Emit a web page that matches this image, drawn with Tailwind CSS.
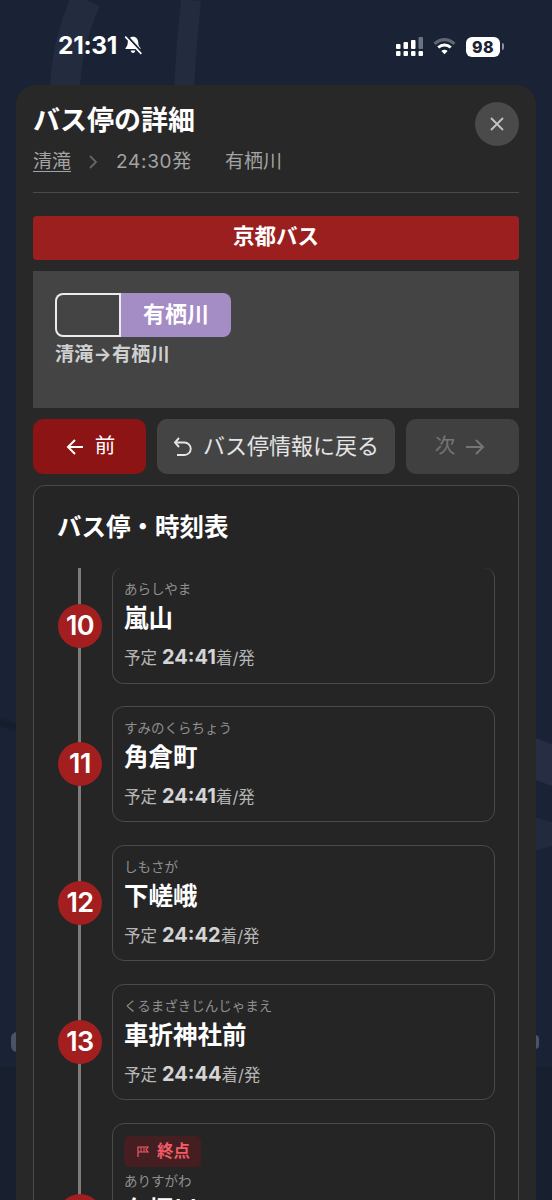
<!doctype html>
<html lang="ja"><head><meta charset="utf-8"><script src="https://cdn.jsdelivr.net/npm/@tailwindcss/browser@4"></script></head>
<body class="m-0">
<div class="relative w-[552px] h-[1200px] overflow-hidden bg-[#1a2335] font-['Inter','Noto_Sans_CJK_JP',sans-serif]">
  <svg class="absolute left-0 top-0" width="552" height="1200" fill="none" stroke="#232c3f">
    <path d="M86 0 Q66 45 65 90" stroke-width="30"/>
    <path d="M191 0 Q186 45 184 90" stroke-width="20"/>
    <path d="M530 736 L552 744 V786 L530 778 Z" fill="#272e43" stroke="none"/>
    <path d="M530 816 L552 822 V846 L530 852 Z" fill="#222a3e" stroke="none"/>
    <path d="M0 722 L16 728" stroke="#161e2e" stroke-width="8"/>
  </svg>
  <div class="absolute left-0 top-[1067px] w-[552px] h-[133px] bg-[#182030]"></div>
  <div class="absolute left-[11px] top-[1032px] w-[6px] h-[20px] rounded-l-full bg-[#4a5368]"></div>
  <div class="absolute left-[535px] top-[1035px] w-[4px] h-[14px] rounded-r-full bg-[#4a5368]"></div>

  <!-- status bar -->
  <div class="absolute left-[58px] top-[30px] flex items-center gap-[6px] text-white">
    <span class="text-[24.500px] leading-[30px] font-bold tracking-[-0.3px]">21:31</span>
    <svg width="20" height="20" viewBox="0 0 18 18" fill="#fff"><path d="M9 1.500c-3 0-4.600 2.200-4.700 5-.1 2.500-.9 4-2 5.300-.3.4 0 .9.4.9h12.600c.5 0 .7-.5.4-.9-1.100-1.300-1.900-2.800-2-5.300-.1-2.800-1.700-5-4.700-5zM7 14h4c0 1.200-.9 2.200-2 2.200S7 15.200 7 14z"/><path d="M3.500 1 L17 15.500" stroke="#1a2335" stroke-width="2"/><path d="M2 1.500 L16.500 17" stroke="#fff" stroke-width="1.500"/></svg>
  </div>
  <svg class="absolute left-[396px] top-[37px]" width="28" height="20" viewBox="0 0 28 20" fill="#fff"><rect x="0" y="7" width="4.500" height="5" rx="1"/><rect x="0" y="14" width="4.500" height="5" rx="1"/><rect x="7.500" y="5" width="4.500" height="7" rx="1"/><rect x="7.500" y="14" width="4.500" height="5" rx="1"/><rect x="15" y="3" width="4.500" height="9" rx="1"/><rect x="15" y="14" width="4.500" height="5" rx="1"/><rect x="22.500" y="0" width="4.500" height="12" rx="1" fill="#6b7280"/><rect x="22.500" y="14" width="4.500" height="5" rx="1"/></svg>
  <svg class="absolute left-[433px] top-[37px]" width="23" height="19" viewBox="0 0 22 18" fill="none"><path d="M1.500 6.500C7 1 15 1 20.500 6.500" stroke="#5f6675" stroke-width="3"/><path d="M5 10c3.500-3.300 8.500-3.300 12 0" stroke="#fff" stroke-width="2.800"/><path d="M11 16.500l-3-3.300c1.800-1.500 4.200-1.500 6 0z" fill="#fff"/></svg>
  <div class="absolute left-[466px] top-[37px] w-[34px] h-[20px] rounded-[6px] bg-white text-[#1a2335] text-[16px] leading-[20px] font-extrabold text-center tracking-[0.5px]">98</div>
  <div class="absolute left-[502px] top-[43px] w-[1.500px] h-[7px] rounded-r bg-[#8a909c]"></div>

  <!-- sheet -->
  <div class="absolute left-[16px] top-[85px] w-[520px] h-[1115px] rounded-t-[20px] bg-[#282828] px-[17px] pt-[17px]">
    <div class="flex justify-between items-start h-[91px] border-b border-[#4a4a4a]">
      <div class="pt-[1px]">
        <div class="text-[27px] leading-[36px] font-bold text-white">バス停の詳細</div>
        <div class="mt-[10px] flex items-center text-[19px] leading-[26px] text-[#a3a3a3]">
          <span class="underline underline-offset-[3px]">清滝</span>
          <svg class="ml-[18px] mr-[18px]" width="9" height="14" viewBox="0 0 9 14" fill="none" stroke="#666" stroke-width="1.800"><path d="M1 1l6 6-6 6"/></svg>
          <span class="w-[109px] tracking-[0.7px]">24:30発</span>
          <span>有栖川</span>
        </div>
      </div>
      <div class="w-[44px] h-[44px] rounded-full bg-[#4a4a4a] flex items-center justify-center">
        <svg width="14" height="14" viewBox="0 0 14 14" stroke="#c4c4c4" stroke-width="1.800"><path d="M1 1l12 12M13 1L1 13"/></svg>
      </div>
    </div>
    <div class="mt-[23px] h-[44px] rounded-[4px] bg-[#9b1f1f] text-white text-[21.500px] leading-[41px] font-bold text-center">京都バス</div>
    <div class="mt-[11px] h-[137px] bg-[#444444] pl-[22px] pt-[22px]">
      <div class="flex h-[44px] w-[176px]">
        <div class="w-[66px] rounded-l-[8px] border-2 border-white/90 bg-[#444444]"></div>
        <div class="w-[110px] rounded-r-[8px] bg-[#a48cc4] text-white text-[22px] leading-[42px] font-bold text-center">有栖川</div>
      </div>
      <div class="mt-[5px] text-[19px] leading-[26px] font-bold tracking-[0.3px] text-[#cfcfcf]">清滝→有栖川</div>
    </div>
    <div class="mt-[11px] flex gap-[11px] h-[55px]">
      <div class="w-[113px] rounded-[10px] bg-[#8c1414] text-white text-[20.500px] flex items-center justify-center gap-[11px] pl-[2px]">
        <svg width="18" height="18" viewBox="0 0 18 18" fill="none" stroke="#fff" stroke-width="2"><path d="M17 9H2M9 2L2 9l7 7"/></svg><span>前</span>
      </div>
      <div class="w-[238px] rounded-[10px] bg-[#444444] text-[#e5e5e5] text-[22px] flex items-center justify-center gap-[10px]">
        <svg width="20" height="20" viewBox="0 0 20 20" fill="none" stroke="#e5e5e5" stroke-width="1.900"><path d="M6 1L2 5.500 6 10"/><path d="M2 5.500h9.500a5.500 5.500 0 0 1 0 12.500H4"/></svg><span>バス停情報に戻る</span>
      </div>
      <div class="flex-1 rounded-[10px] bg-[#404040] text-[#757575] text-[20.500px] flex items-center justify-center gap-[10px] pr-[5px]">
        <span>次</span><svg width="20" height="18" viewBox="0 0 20 18" fill="none" stroke="#757575" stroke-width="2"><path d="M1 9h17M11 2l7 7-7 7"/></svg>
      </div>
    </div>
    <div class="mt-[11px] h-[800px] rounded-[12px] border border-[#4a4a4a] bg-[#252525] relative overflow-hidden">
      <div class="pl-[23px] pt-[25px] text-[24.500px] leading-[32px] font-bold text-white">バス停・時刻表</div>
      <div class="absolute left-[44px] top-[82px] w-[3px] h-[640px] bg-[#7c7c7c]"></div>
      <div class="absolute left-[78px] top-[82px] w-[383px] flex flex-col gap-[22.750px]">
        <!-- stops -->
        <div class="relative h-[115.500px] rounded-[12px] border border-[#4a4a4a] border-t-0 rounded-t-[10px] px-[11px] pt-[11px]">
          <div class="absolute left-[-55px] top-[35.500px] w-[44px] h-[44px] rounded-full bg-[#a31f1f] text-white text-[27px] font-semibold leading-[44px] text-center tracking-[-0.5px]">10</div>
          <div class="text-[13.500px] leading-[20px] text-[#8f8f8f]">あらしやま</div>
          <div class="text-[24.500px] leading-[32px] mt-[3px] font-bold text-white">嵐山</div>
          <div class="flex items-baseline mt-[10px] text-[16.500px] leading-[26px] text-[#b5b5b5]"><span>予定</span><span class="ml-[5px] text-[20px] font-bold text-[#d4d4d4]">24:41</span><span>着/発</span></div>
        </div>
        <div class="relative h-[116px] rounded-[12px] border border-[#4a4a4a] px-[11px] pt-[11px]">
          <div class="absolute left-[-55px] top-[35px] w-[44px] h-[44px] rounded-full bg-[#a31f1f] text-white text-[27px] font-semibold leading-[44px] text-center tracking-[-0.5px]">11</div>
          <div class="text-[13.500px] leading-[20px] text-[#8f8f8f]">すみのくらちょう</div>
          <div class="text-[24.500px] leading-[32px] mt-[3px] font-bold text-white">角倉町</div>
          <div class="flex items-baseline mt-[10px] text-[16.500px] leading-[26px] text-[#b5b5b5]"><span>予定</span><span class="ml-[5px] text-[20px] font-bold text-[#d4d4d4]">24:41</span><span>着/発</span></div>
        </div>
        <div class="relative h-[116px] rounded-[12px] border border-[#4a4a4a] px-[11px] pt-[11px]">
          <div class="absolute left-[-55px] top-[35px] w-[44px] h-[44px] rounded-full bg-[#a31f1f] text-white text-[27px] font-semibold leading-[44px] text-center tracking-[-0.5px]">12</div>
          <div class="text-[13.500px] leading-[20px] text-[#8f8f8f]">しもさが</div>
          <div class="text-[24.500px] leading-[32px] mt-[3px] font-bold text-white">下嵯峨</div>
          <div class="flex items-baseline mt-[10px] text-[16.500px] leading-[26px] text-[#b5b5b5]"><span>予定</span><span class="ml-[5px] text-[20px] font-bold text-[#d4d4d4]">24:42</span><span>着/発</span></div>
        </div>
        <div class="relative h-[116px] rounded-[12px] border border-[#4a4a4a] px-[11px] pt-[11px]">
          <div class="absolute left-[-55px] top-[35px] w-[44px] h-[44px] rounded-full bg-[#a31f1f] text-white text-[27px] font-semibold leading-[44px] text-center tracking-[-0.5px]">13</div>
          <div class="text-[13.500px] leading-[20px] text-[#8f8f8f]">くるまざきじんじゃまえ</div>
          <div class="text-[24.500px] leading-[32px] mt-[3px] font-bold text-white">車折神社前</div>
          <div class="flex items-baseline mt-[10px] text-[16.500px] leading-[26px] text-[#b5b5b5]"><span>予定</span><span class="ml-[5px] text-[20px] font-bold text-[#d4d4d4]">24:44</span><span>着/発</span></div>
        </div>
        <div class="relative h-[200px] rounded-[12px] border border-[#4a4a4a] px-[11px] pt-[12px]">
          <div class="absolute left-[-55px] top-[70px] w-[44px] h-[44px] rounded-full bg-[#a31f1f] text-white text-[27px] font-semibold leading-[44px] text-center tracking-[-0.5px]">14</div>
          <div class="flex items-center gap-[8px] w-[77px] h-[31px] rounded-[5px] bg-[#441e20] pl-[13px] text-[16.500px] font-bold text-[#f25c66]">
            <svg width="12" height="11" viewBox="0 0 12 11" fill="none" stroke="#f25c66" stroke-width="1.200"><path d="M1 11V1h10L9 3.500l2 2.500H1"/><path d="M4 1v5M7 1v5" stroke-width="1"/></svg><span>終点</span>
          </div>
          <div class="mt-[4px] text-[13.500px] leading-[20px] text-[#8f8f8f]">ありすがわ</div>
          <div class="text-[24.500px] leading-[32px] mt-[3px] font-bold text-white">有栖川</div>
        </div>
      </div>
    </div>
  </div>
</div>
</body></html>
